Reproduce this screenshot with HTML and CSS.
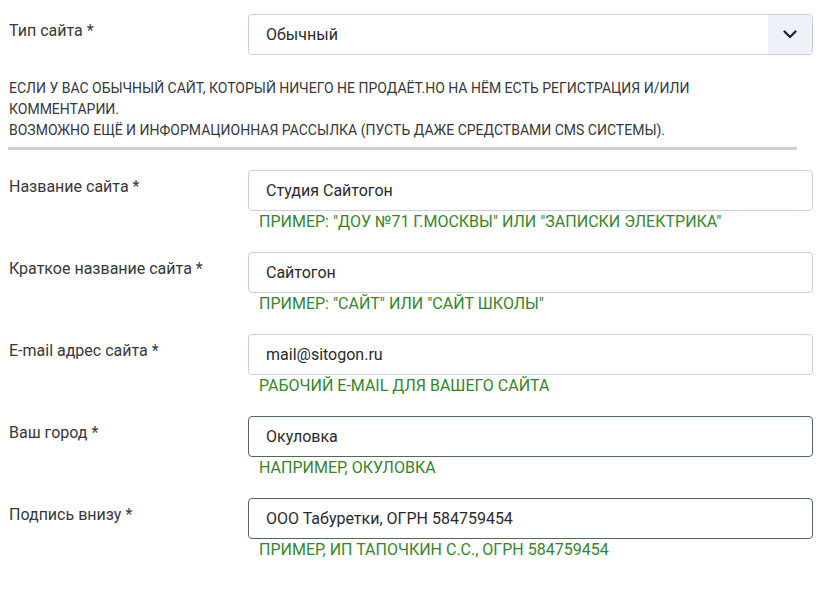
FILE: index.html
```html
<!DOCTYPE html>
<html lang="ru">
  <head>
    <meta charset="UTF-8" />
    <meta name="viewport" content="width=device-width, initial-scale=1.0" />
    <title>Настройки сайта</title>
    <link rel="stylesheet" href="styles.css">
  </head>
  <body>
    <form class="site-form">
      <div class="field">
        <label class="field-label" for="site-type">Тип сайта *</label>
        <div class="field-control">
          <div class="select">
            <span class="select-value">Обычный</span>
            <span class="select-arrow">
              <svg width="14" height="9" viewBox="0 0 14 9"><path d="M1.5 1.5 L7 7 L12.5 1.5" fill="none" stroke="#1f2328" stroke-width="2.2" stroke-linecap="round" stroke-linejoin="round"/></svg>
            </span>
          </div>
        </div>
      </div>

      <p class="type-note">
        Если у вас обычный сайт, который ничего не продаёт.Но на нём есть регистрация и/или<br>
        комментарии.<br>
        Возможно ещё и информационная рассылка (пусть даже средствами CMS системы).
      </p>
      <hr class="divider">

      <div class="field">
        <label class="field-label">Название сайта *</label>
        <div class="field-control">
          <div class="input">Студия Сайтогон</div>
          <p class="hint">Пример: "ДОУ №71 г.Москвы" или "Записки электрика"</p>
        </div>
      </div>

      <div class="field">
        <label class="field-label">Краткое название сайта *</label>
        <div class="field-control">
          <div class="input">Сайтогон</div>
          <p class="hint">Пример: "Сайт" или "Сайт школы"</p>
        </div>
      </div>

      <div class="field">
        <label class="field-label">E-mail адрес сайта *</label>
        <div class="field-control">
          <div class="input">mail@sitogon.ru</div>
          <p class="hint">Рабочий e-mail для вашего сайта</p>
        </div>
      </div>

      <div class="field">
        <label class="field-label">Ваш город *</label>
        <div class="field-control">
          <div class="input valid">Окуловка</div>
          <p class="hint">Например, Окуловка</p>
        </div>
      </div>

      <div class="field">
        <label class="field-label">Подпись внизу *</label>
        <div class="field-control">
          <div class="input valid">ООО Табуретки, ОГРН 584759454</div>
          <p class="hint">Пример, ИП Тапочкин С.С., ОГРН 584759454</p>
        </div>
      </div>
    </form>
  </body>
</html>
```

FILE: styles.css
```css
* {
  margin: 0;
  padding: 0;
  box-sizing: border-box;
}

body {
  margin: 0;
  padding: 14px 14px 0 8px;
  font-family: Roboto, "Noto Sans", sans-serif;
  background: #fff;
  color: #333;
}

.site-form {
  width: 805px;
}

.field {
  display: grid;
  grid-template-columns: 240px 565px;
  margin-bottom: 19px;
}

.field-label {
  padding: 5px 0 0 1px;
  font-size: 16px;
  line-height: 24px;
  color: #363839;
}

.select,
.input {
  height: 41px;
  border: 1px solid #c9d0d9;
  border-radius: 4px;
  background: #fff;
  font-size: 16px;
  color: #2a2a2a;
  display: flex;
  align-items: center;
}

.input {
  padding-left: 17px;
}

.input.valid {
  border-color: #52695a;
}

.select {
  justify-content: space-between;
  overflow: hidden;
}

.select-value {
  padding-left: 17px;
}

.select-arrow {
  width: 44px;
  height: 100%;
  background: #eef2f8;
  display: flex;
  align-items: center;
  justify-content: center;
}

.hint {
  padding-left: 11px;
  font-size: 16px;
  line-height: 22px;
  text-transform: uppercase;
  color: #35862b;
}

.type-note {
  margin-top: 23px;
  padding-left: 1px;
  font-size: 14px;
  line-height: 21px;
  text-transform: uppercase;
  color: #363839;
}

.divider {
  margin: 6px 0 20px;
  width: 789px;
  border: none;
  height: 3px;
  background: #cfcfcf;
}
```
